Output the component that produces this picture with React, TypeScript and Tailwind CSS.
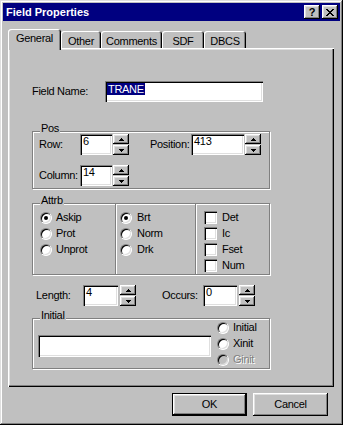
import React from "react";

const sunken =
  "bg-white shadow-[inset_1px_1px_#808080,inset_2px_2px_#000,inset_-1px_-1px_#fff,inset_-2px_-2px_#dfdfdf]";
const raised =
  "bg-[#c0c0c0] shadow-[inset_-1px_-1px_#000,inset_1px_1px_#fff,inset_-2px_-2px_#808080,inset_2px_2px_#dfdfdf]";
const etched = "border border-[#808080] shadow-[inset_1px_1px_#fff,1px_1px_#fff]";

function Arrow({ up }: { up: boolean }) {
  return (
    <svg width="5" height="3" viewBox="0 0 5 3" shapeRendering="crispEdges">
      {up ? (
        <>
          <rect x="2" y="0" width="1" height="1" fill="#000" />
          <rect x="1" y="1" width="3" height="1" fill="#000" />
          <rect x="0" y="2" width="5" height="1" fill="#000" />
        </>
      ) : (
        <>
          <rect x="0" y="0" width="5" height="1" fill="#000" />
          <rect x="1" y="1" width="3" height="1" fill="#000" />
          <rect x="2" y="2" width="1" height="1" fill="#000" />
        </>
      )}
    </svg>
  );
}

function Spin({ ml }: { ml: string }) {
  return (
    <div className={`flex flex-col gap-[1px] w-[16px] h-[21px] ${ml}`}>
      <div className={`${raised} h-[10px] flex items-center justify-center`}>
        <Arrow up />
      </div>
      <div className={`${raised} h-[10px] flex items-center justify-center`}>
        <Arrow up={false} />
      </div>
    </div>
  );
}

function Field({ w, value }: { w: string; value: string }) {
  return (
    <div className={`${sunken} ${w} h-[21px] flex items-start pt-[2px] pl-[3px]`}>
      {value}
    </div>
  );
}

function Radio({ checked, disabled }: { checked?: boolean; disabled?: boolean }) {
  return (
    <div
      className={`relative w-[12px] h-[12px] rounded-full border border-t-[#808080] border-l-[#808080] border-b-white border-r-white ${
        disabled ? "bg-[#c0c0c0]" : "bg-white"
      }`}
    >
      <div className="absolute inset-0 rounded-full shadow-[inset_1px_1px_#000,inset_-1px_-1px_#dfdfdf]" />
      {checked && (
        <div className="absolute left-[3px] top-[3px] w-[4px] h-[4px] rounded-full bg-black" />
      )}
    </div>
  );
}

function RadioRow({
  label,
  checked,
  disabled,
  gap,
}: {
  label: string;
  checked?: boolean;
  disabled?: boolean;
  gap: string;
}) {
  return (
    <div className={`flex items-center h-[13px] ${gap}`}>
      <Radio checked={checked} disabled={disabled} />
      <span className={disabled ? "text-[#808080] [text-shadow:1px_1px_0_#fff]" : ""}>{label}</span>
    </div>
  );
}

function CheckRow({ label }: { label: string }) {
  return (
    <div className="flex items-center h-[13px] gap-[5px]">
      <div className={`w-[13px] h-[13px] ${sunken}`} />
      <span>{label}</span>
    </div>
  );
}

function Tab({ label, w, selected }: { label: string; w: string; selected?: boolean }) {
  return (
    <div
      className={`${w} ${
        selected ? "relative z-10 h-[21px] pt-[4px]" : "h-[17px] mt-[2px] pt-[5px]"
      } bg-[#c0c0c0] rounded-t-[3px] shadow-[inset_1px_1px_#fff,inset_-1px_0_#000,inset_-2px_0_#808080] flex justify-center`}
    >
      {label}
    </div>
  );
}

function GroupLabel({ text }: { text: string }) {
  return (
    <span className="absolute -top-[9px] left-[7px] bg-[#c0c0c0] px-[1px]">{text}</span>
  );
}

export default function App() {
  return (
    <div className="w-[343px] h-[425px] bg-[#c0c0c0] p-[3px] shadow-[inset_-1px_-1px_#000,inset_1px_1px_#dfdfdf,inset_-2px_-2px_#808080,inset_2px_2px_#fff] font-['Liberation_Sans',Arial,sans-serif] text-[11px] text-black leading-none tracking-[-0.3px] select-none">
      {/* Title bar */}
      <div className="h-[18px] bg-[#000080] flex items-center pl-[3px] pr-[2px]">
        <span className="text-white font-bold tracking-normal">Field Properties</span>
        <div className="ml-auto flex gap-[2px]">
          <div className={`${raised} w-[16px] h-[14px] flex items-center justify-center font-bold text-[11px] tracking-normal`}>
            ?
          </div>
          <div className={`${raised} w-[16px] h-[14px] flex items-center justify-center`}>
            <svg width="8" height="7" viewBox="0 0 8 7" shapeRendering="crispEdges">
              <rect x="0" y="0" width="2" height="1" fill="#000" />
              <rect x="6" y="0" width="2" height="1" fill="#000" />
              <rect x="1" y="1" width="2" height="1" fill="#000" />
              <rect x="5" y="1" width="2" height="1" fill="#000" />
              <rect x="2" y="2" width="4" height="1" fill="#000" />
              <rect x="3" y="3" width="2" height="1" fill="#000" />
              <rect x="2" y="4" width="4" height="1" fill="#000" />
              <rect x="1" y="5" width="2" height="1" fill="#000" />
              <rect x="5" y="5" width="2" height="1" fill="#000" />
              <rect x="0" y="6" width="2" height="1" fill="#000" />
              <rect x="6" y="6" width="2" height="1" fill="#000" />
            </svg>
          </div>
        </div>
      </div>

      {/* Body */}
      <div className="pl-[5px] pt-[8px]">
        {/* Tabs */}
        <div className="flex items-start h-[19px]">
          <Tab label="General" w="w-[53px]" selected />
          <Tab label="Other" w="w-[40px]" />
          <Tab label="Comments" w="w-[61px]" />
          <Tab label="SDF" w="w-[42px]" />
          <Tab label="DBCS" w="w-[42px]" />
        </div>

        {/* Panel */}
        <div className="w-[326px] h-[339px] shadow-[inset_1px_1px_#fff,inset_-1px_-1px_#000,inset_-2px_-2px_#808080,inset_2px_2px_#dfdfdf] flex flex-col">
          {/* Field Name */}
          <div className="mt-[33px] ml-[24px] flex items-center h-[21px]">
            <span className="w-[73px]">Field Name:</span>
            <div className={`${sunken} w-[158px] h-[21px] flex items-start pt-[2px] pl-[2px]`}>
              <span className="inline-block bg-[#000080] text-white h-[12px] leading-[12px] px-[1px]">
                TRANE
              </span>
            </div>
          </div>

          {/* Pos group */}
          <div className={`relative mt-[29px] ml-[24px] w-[238px] h-[58px] ${etched}`}>
            <GroupLabel text="Pos" />
            <div className="flex items-center h-[21px] mt-[2px]">
              <span className="ml-[6px] w-[41px]">Row:</span>
              <Field w="w-[32px]" value="6" />
              <Spin ml="ml-[1px]" />
              <span className="ml-[21px] w-[41px]">Position:</span>
              <Field w="w-[53px]" value="413" />
              <Spin ml="ml-[1px]" />
            </div>
            <div className="flex items-center h-[21px] mt-[10px]">
              <span className="ml-[6px] w-[41px]">Column:</span>
              <Field w="w-[32px]" value="14" />
              <Spin ml="ml-[1px]" />
            </div>
          </div>

          {/* Attrb group */}
          <div className={`relative mt-[14px] ml-[24px] w-[238px] h-[72px] ${etched} flex`}>
            <GroupLabel text="Attrb" />
            <div className="w-[82px] pl-[7px] pt-[7px] flex flex-col gap-[3px]">
              <RadioRow label="Askip" checked gap="gap-[4px]" />
              <RadioRow label="Prot" gap="gap-[4px]" />
              <RadioRow label="Unprot" gap="gap-[4px]" />
            </div>
            <div className="w-[80px] border-l border-[#808080] shadow-[inset_1px_0_#fff] pl-[4px] pt-[7px] flex flex-col gap-[3px]">
              <RadioRow label="Brt" checked gap="gap-[5px]" />
              <RadioRow label="Norm" gap="gap-[5px]" />
              <RadioRow label="Drk" gap="gap-[5px]" />
            </div>
            <div className="flex-1 border-l border-[#808080] shadow-[inset_1px_0_#fff] pl-[8px] pt-[7px] flex flex-col gap-[3px]">
              <CheckRow label="Det" />
              <CheckRow label="Ic" />
              <CheckRow label="Fset" />
              <CheckRow label="Num" />
            </div>
          </div>

          {/* Length / Occurs */}
          <div className="flex items-center h-[21px] mt-[10px] ml-[28px]">
            <span className="w-[47px]">Length:</span>
            <Field w="w-[35px]" value="4" />
            <Spin ml="ml-[2px]" />
            <span className="ml-[26px] w-[41px]">Occurs:</span>
            <Field w="w-[34px]" value="0" />
            <Spin ml="ml-[2px]" />
          </div>

          {/* Initial group */}
          <div className={`relative mt-[12px] ml-[24px] w-[238px] h-[51px] ${etched} flex items-start`}>
            <GroupLabel text="Initial" />
            <div className={`${sunken} ml-[5px] mt-[16px] w-[173px] h-[22px]`} />
            <div className="ml-[6px] mt-[2px] flex flex-col gap-[3px]">
              <RadioRow label="Initial" gap="gap-[4px]" />
              <RadioRow label="Xinit" gap="gap-[4px]" />
              <RadioRow label="Ginit" disabled gap="gap-[4px]" />
            </div>
          </div>
        </div>

        {/* Buttons */}
        <div className="w-[326px] pr-[6px] mt-[6px] flex justify-end gap-[6px]">
          <div className="w-[75px] h-[23px] border border-black">
            <div className={`${raised} w-full h-full flex items-center justify-center`}>OK</div>
          </div>
          <div className={`${raised} w-[75px] h-[23px] flex items-center justify-center`}>Cancel</div>
        </div>
      </div>
    </div>
  );
}
